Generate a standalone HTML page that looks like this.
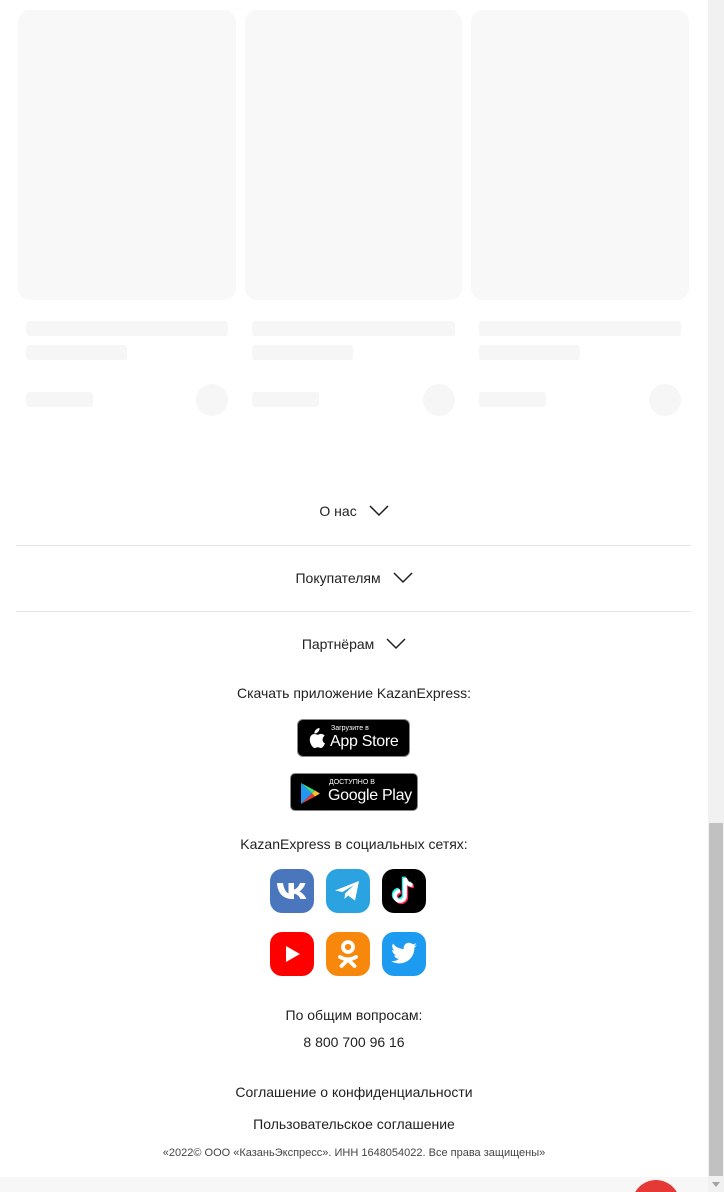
<!DOCTYPE html>
<html style="overflow:hidden;height:1192px"><head><meta charset="utf-8"><style>
*{margin:0;padding:0;box-sizing:border-box}
body{width:724px;height:1192px;overflow:hidden;background:#fff;font-family:"Liberation Sans",sans-serif;color:#1f1f1f;position:relative}
.a{position:absolute}
.card{background:#f8f8f8;border-radius:12px;top:10px;height:290px;width:218px}
.bar{background:#f6f6f6;border-radius:3px}
.c{text-align:center;left:0;width:708px;font-size:14px}
.acc{font-size:14px}
.line{left:16px;width:675px;height:1px;background:#e4e4e4}
.ic{width:44px;height:44px;border-radius:12px}
</style></head><body>
<div class="a card" style="left:18px"></div>
<div class="a card" style="left:245px;width:217px"></div>
<div class="a card" style="left:471px"></div>
<div class="a bar" style="left:26px;top:321px;width:202px;height:15px"></div>
<div class="a bar" style="left:252px;top:321px;width:203px;height:15px"></div>
<div class="a bar" style="left:479px;top:321px;width:202px;height:15px"></div>
<div class="a bar" style="left:26px;top:345px;width:101px;height:15px"></div>
<div class="a bar" style="left:252px;top:345px;width:101px;height:15px"></div>
<div class="a bar" style="left:479px;top:345px;width:101px;height:15px"></div>
<div class="a bar" style="left:26px;top:392px;width:67px;height:15px"></div>
<div class="a bar" style="left:252px;top:392px;width:67px;height:15px"></div>
<div class="a bar" style="left:479px;top:392px;width:67px;height:15px"></div>
<div class="a bar" style="left:196px;top:384px;width:32px;height:32px;border-radius:50%"></div>
<div class="a bar" style="left:423px;top:384px;width:32px;height:32px;border-radius:50%"></div>
<div class="a bar" style="left:649px;top:384px;width:32px;height:32px;border-radius:50%"></div>

<div class="a c acc" style="top:503px">О нас <svg width="20" height="12" style="margin-left:8px;vertical-align:-1px" viewBox="0 0 20 12"><path d="M1 1l9 9 9-9" fill="none" stroke="#1f1f1f" stroke-width="1.5"/></svg></div>
<div class="a line" style="top:545px"></div>
<div class="a c acc" style="top:570px">Покупателям <svg width="20" height="12" style="margin-left:8px;vertical-align:-1px" viewBox="0 0 20 12"><path d="M1 1l9 9 9-9" fill="none" stroke="#1f1f1f" stroke-width="1.5"/></svg></div>
<div class="a line" style="top:611px"></div>
<div class="a c acc" style="top:636px">Партнёрам <svg width="20" height="12" style="margin-left:8px;vertical-align:-1px" viewBox="0 0 20 12"><path d="M1 1l9 9 9-9" fill="none" stroke="#1f1f1f" stroke-width="1.5"/></svg></div>

<div class="a c" style="top:685px">Скачать приложение KazanExpress:</div>
<div class="a" style="left:297px;top:719px;width:113px;height:38px;background:#000;border-radius:6px;border:1px solid #888;color:#fff">
<svg class="a" style="left:8px;top:8px" width="20" height="22" viewBox="0 0 20 22"><path d="M13.5 0c.2 1.5-.5 3-1.5 4s-2.4 1.6-3.6 1.5c-.2-1.4.6-2.9 1.5-3.8S12.3.1 13.5 0zM16.6 11.7c0 2.6 2.3 3.5 2.4 3.5-.1.2-.4 1.3-1.2 2.5-.8 1.1-1.6 2.2-2.9 2.3-1.3 0-1.7-.8-3.1-.8-1.5 0-1.900.7-3.100.8-1.200 0-2.200-1.200-3-2.400C4.100 15.300 2.900 11.200 4.600 8.300c.8-1.400 2.300-2.300 3.900-2.300 1.200 0 2.400.8 3.100.8.700 0 2.100-1 3.600-.9.600 0 2.400.3 3.500 1.900-.1.100-2.100 1.200-2.100 3.900z" fill="#fff"/></svg>
<div class="a" style="left:33px;top:5px;font-size:7px">Загрузите в</div>
<div class="a" style="left:32px;top:13px;font-size:16px;letter-spacing:-.3px">App Store</div></div>
<div class="a" style="left:290px;top:773px;width:128px;height:38px;background:#000;border-radius:5px;border:1px solid #888;color:#fff">
<svg class="a" style="left:9px;top:8px" width="22" height="23" viewBox="0 0 22 23"><path d="M1 1l11 10.5L1 22z" fill="#2196f3"/><path d="M1 1l14 7.5-3 3z" fill="#3ddc84"/><path d="M1 22l14-7.5-3-3z" fill="#e53935"/><path d="M15 8.5l5 3-5 3-3-3z" fill="#fbc02d"/></svg>
<div class="a" style="left:38px;top:5px;font-size:7px">ДОСТУПНО В</div>
<div class="a" style="left:37px;top:13px;font-size:16px;letter-spacing:-.3px">Google Play</div></div>

<div class="a c" style="top:836px">KazanExpress в социальных сетях:</div>
<div class="a ic" style="left:270px;top:869px;background:#4a76be"><svg width="44" height="44" viewBox="0 0 44 44"><path d="M7 14h6c.5 4.500 2.500 9 5.500 10.500V14h5.500v6.500c3-.5 5-4 6-6.500h5.500c-1 4-4 7-6 8.500 2.500 1 5.500 4 7 7.500h-6c-1.300-3-3.500-5-6.500-5.300V30h-1.500C12 30 7.500 23 7 14z" fill="#fff"/></svg></div>
<div class="a ic" style="left:326px;top:869px;background:#2aa3e0"><svg width="44" height="44" viewBox="0 0 44 44"><path d="M9 21.500l24-9.500-4 19.500-7-5-3.500 3.500.5-5.500 9-8.500-11.500 7z" fill="#fff"/></svg></div>
<div class="a ic" style="left:382px;top:869px;background:#000"><svg width="44" height="44" viewBox="0 0 44 44"><g fill="none" stroke-width="3.800"><path d="M23 9v18a5 5 0 1 1-5-5M23 9c.5 4 3.500 7 7.500 7" stroke="#25f4ee" transform="translate(-1.300 -1.300)"/><path d="M23 9v18a5 5 0 1 1-5-5M23 9c.5 4 3.500 7 7.500 7" stroke="#fe2c55" transform="translate(1.300 1.300)"/><path d="M23 9v18a5 5 0 1 1-5-5M23 9c.5 4 3.500 7 7.500 7" stroke="#fff"/></g></svg></div>
<div class="a ic" style="left:270px;top:932px;background:#f00"><svg width="44" height="44" viewBox="0 0 44 44"><path d="M16 14l14 8-14 8z" fill="#fff"/></svg></div>
<div class="a ic" style="left:326px;top:932px;background:#f7880b"><svg width="44" height="44" viewBox="0 0 44 44"><circle cx="22" cy="15" r="5" fill="none" stroke="#fff" stroke-width="3.800"/><path d="M14 25c5 3 11 3 16 0M22 27.500l-6.500 6.500M22 27.500l6.500 6.500" fill="none" stroke="#fff" stroke-width="3.800" stroke-linecap="round"/></svg></div>
<div class="a ic" style="left:382px;top:932px;background:#1d9bf0"><svg width="44" height="44" viewBox="0 0 24 24" style="padding:8px;width:44px;height:44px"><path d="M23 4.500c-.8.4-1.700.6-2.600.7.900-.6 1.600-1.400 2-2.500-.9.500-1.900.9-2.900 1.100A4.500 4.500 0 0 0 11.800 7.800 12.800 12.800 0 0 1 2.500 3.100a4.500 4.500 0 0 0 1.400 6c-.7 0-1.400-.2-2-.6 0 2.200 1.500 4 3.600 4.500-.7.200-1.400.2-2 .1.600 1.800 2.300 3.100 4.200 3.100A9 9 0 0 1 1 18.100 12.800 12.800 0 0 0 8 20c8.300 0 12.900-6.900 12.900-12.900v-.6c.9-.6 1.600-1.400 2.100-2z" fill="#fff"/></svg></div>

<div class="a c" style="top:1007px">По общим вопросам:</div>
<div class="a c" style="top:1034px">8 800 700 96 16</div>
<div class="a c" style="top:1084px">Соглашение о конфиденциальности</div>
<div class="a c" style="top:1116px">Пользовательское соглашение</div>
<div class="a c" style="top:1147px;font-size:11px;color:#444">«2022© ООО «КазаньЭкспресс». ИНН 1648054022. Все права защищены»</div>
<div class="a" style="left:0;top:1177px;width:708px;height:15px;background:#f7f7f7"></div>
<div class="a" style="left:632px;top:1180px;width:48px;height:12px;overflow:hidden"><div style="width:48px;height:48px;border-radius:50%;background:#e53935"></div></div>
<div class="a" style="left:708px;top:0;width:16px;height:1192px;background:#f1f1f1"></div>
<div class="a" style="left:709px;top:823px;width:14px;height:353px;background:#c1c1c1"></div>
<div class="a" style="left:712px;top:1182px;border-left:4px solid transparent;border-right:4px solid transparent;border-top:5px solid #a3a3a3"></div>
</body></html>
